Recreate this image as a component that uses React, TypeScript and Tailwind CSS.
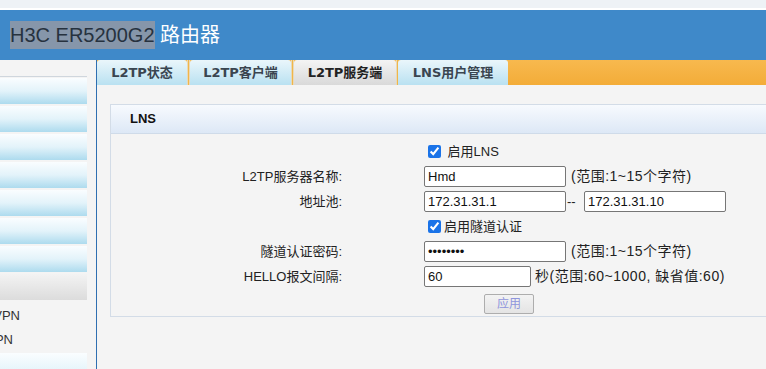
import React from "react";

const font = { fontFamily: '"Liberation Sans", Arial, "Noto Sans CJK SC", sans-serif' };

function SideItem({ h = 26 }: { h?: number }) {
  return (
    <div
      className="w-[87px] mb-[2px] bg-gradient-to-b from-[#fafdff] via-[#e3f3fa] to-[#addbee]"
      style={{ height: h }}
    />
  );
}

function Tab({ label, w, active }: { label: string; w: number; active?: boolean }) {
  return (
    <div
      className={
        "h-[25px] flex items-center justify-center rounded-t-[3px] text-[13px] font-bold " +
        (active
          ? "bg-gradient-to-b from-[#f4f4f4] to-[#d9d9d9] text-[#222]"
          : "bg-gradient-to-b from-[#eaf6fb] to-[#b9e1f1] text-[#3a4550]")
      }
      style={{ width: w, fontFamily: '"DejaVu Sans", Verdana, "Noto Sans CJK SC", sans-serif' }}
    >
      {label}
    </div>
  );
}

function Row({ label, children, className = "" }: { label?: string; children: React.ReactNode; className?: string }) {
  return (
    <div className={"flex items-center h-[25px] " + className}>
      <div className="w-[231px] text-right text-[13px] text-[#222] whitespace-nowrap">{label}</div>
      <div className="ml-[82px] flex items-center text-[13px] text-[#222] whitespace-nowrap">{children}</div>
    </div>
  );
}

function Hint({ children, ml }: { children: React.ReactNode; ml: string }) {
  return <span className={"text-[14px] tracking-[0.5px] " + ml}>{children}</span>;
}

function TextInput({ w, value, type = "text" }: { w: number; value: string; type?: string }) {
  return (
    <input
      type={type}
      defaultValue={value}
      className="h-[21px] border border-[#767676] rounded-[2px] bg-white px-[3px] text-[13px] text-[#111] outline-none"
      style={{ width: w, ...font }}
    />
  );
}

export default function App() {
  return (
    <div className="w-[766px] h-[369px] overflow-hidden bg-[#f4f4f4]" style={font}>
      <div className="h-[8px] bg-[#eef2f6]" />
      <div className="h-[2px] bg-white" />
      <div className="h-[50px] bg-[#3f89c9] flex items-center pl-[10px]">
        <span className="text-[20px] leading-[28px] bg-[#8696aa] text-[#26323f]">H3C ER5200G2</span>
        <span className="text-[20px] leading-[28px] text-white">&nbsp;路由器</span>
      </div>
      <div className="flex h-[309px]">
        <div className="w-[97px] shrink-0 border-r border-[#2f6fb1] pt-[16px] overflow-hidden">
          <div className="w-[87px] h-[1px] bg-[#cfd6dd] mb-[1px]" />
          <SideItem />
          <SideItem />
          <SideItem />
          <SideItem />
          <SideItem />
          <SideItem />
          <SideItem />
          <div className="w-[87px] h-[26px] mt-[1px] bg-gradient-to-b from-[#f3f3f3] to-[#dcdcdc]" />
          <div className="w-[20px] h-[24px] mt-[4px] flex items-center justify-end overflow-hidden">
            <span className="shrink-0 text-[13px] text-[#333] whitespace-nowrap">IPSec VPN</span>
          </div>
          <div className="w-[13px] h-[24px] flex items-center justify-end overflow-hidden">
            <span className="shrink-0 text-[13px] text-[#333] whitespace-nowrap">L2TP VPN</span>
          </div>
          <div className="mt-[1px]">
            <SideItem h={40} />
          </div>
        </div>
        <div className="flex-1 overflow-hidden">
          <div className="h-[25px] flex bg-gradient-to-b from-[#f7b94e] to-[#f3ac38]">
            <Tab label="L2TP状态" w={90} />
            <div className="w-[3px] bg-[#e9d9b8] flex justify-center"><div className="w-[1px] bg-[#f0b64a]" /></div>
            <Tab label="L2TP客户端" w={101} />
            <div className="w-[3px] bg-[#e9d9b8] flex justify-center"><div className="w-[1px] bg-[#f0b64a]" /></div>
            <Tab label="L2TP服务端" w={102} active />
            <div className="w-[2px] bg-[#e9d9b8] flex justify-center"><div className="w-[1px] bg-[#f0b64a]" /></div>
            <Tab label="LNS用户管理" w={110} />
          </div>
          <div className="pl-[13px] pt-[19px]">
            <div className="w-[700px] border border-[#d3dce7] bg-[#f4f4f4]">
              <div className="h-[29px] flex items-center pl-[19px] border-b border-[#cfdbe9] bg-gradient-to-b from-[#f7fafe] to-[#dde8f6]">
                <span className="text-[13px] font-bold text-[#111]">LNS</span>
              </div>
              <div className="pt-[5px]">
                <Row>
                  <input type="checkbox" defaultChecked className="w-[13px] h-[13px] ml-[4px] mr-[3px] accent-[#1a73e8]" />
                  <span>&nbsp;启用LNS</span>
                </Row>
                <Row label="L2TP服务器名称:">
                  <TextInput w={142} value="Hmd" />
                  <Hint ml="ml-[5px]">(范围:1~15个字符)</Hint>
                </Row>
                <Row label="地址池:">
                  <TextInput w={142} value="172.31.31.1" />
                  <span className="ml-[1px] w-[17px]">--</span>
                  <TextInput w={142} value="172.31.31.10" />
                </Row>
                <Row>
                  <input type="checkbox" defaultChecked className="w-[13px] h-[13px] ml-[4px] mr-[3px] accent-[#1a73e8]" />
                  <span>启用隧道认证</span>
                </Row>
                <Row label="隧道认证密码:">
                  <TextInput w={142} value="12345678" type="password" />
                  <Hint ml="ml-[5px]">(范围:1~15个字符)</Hint>
                </Row>
                <Row label="HELLO报文间隔:">
                  <TextInput w={107} value="60" />
                  <Hint ml="ml-[4px]">秒(范围:60~1000, 缺省值:60)</Hint>
                </Row>
                <div className="flex items-center h-[25px] mt-[2px]">
                  <div className="ml-[373px] w-[50px] h-[20px] flex items-center justify-center border border-[#adadad] rounded-[2px] bg-gradient-to-b from-[#f3f3f3] to-[#e4e4e4] text-[12px] text-[#8f95dc]">
                    应用
                  </div>
                </div>
              </div>
            </div>
          </div>
        </div>
      </div>
    </div>
  );
}
